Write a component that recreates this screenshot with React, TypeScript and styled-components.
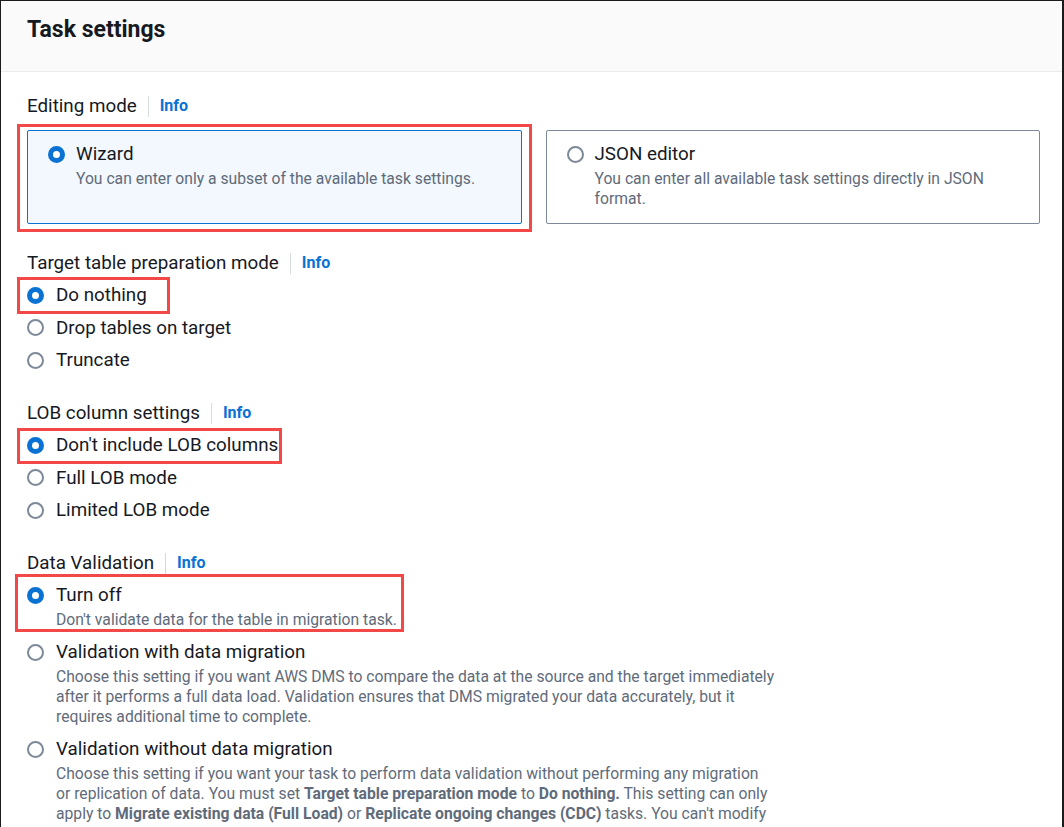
import React from 'react';
import styled, { createGlobalStyle } from 'styled-components';

const GlobalStyle = createGlobalStyle`
  html, body { margin: 0; padding: 0; background: #ffffff; }
  body { font-family: Roboto, "Open Sans", Arial, sans-serif; color: #16191f; }
  * { box-sizing: border-box; }
`;

const Frame = styled.div`
  width: 1064px;
  height: 827px;
  overflow: hidden;
  background: #ffffff;
  border-top: 1px solid #1b1b1b;
  border-left: 1px solid #1b1b1b;
  border-right: 2px solid #1b1b1b;
`;

const Header = styled.header`
  height: 71px;
  background: #fafafa;
  border-bottom: 1px solid #e9ebed;
  padding: 15px 26px 0;
`;

const Title = styled.h2`
  margin: 0;
  font-size: 23px;
  line-height: 28px;
  font-weight: 700;
  color: #16191f;
`;

const Body = styled.div`
  display: flex;
  flex-direction: column;
  gap: 31px;
  padding: 23px 22px 0 26px;
`;

const Field = styled.section<{ $tight?: boolean }>`
  display: flex;
  flex-direction: column;
  margin-bottom: ${(p) => (p.$tight ? '-3px' : '0')};
`;

const FieldLabel = styled.div`
  display: flex;
  align-items: center;
  font-size: 18.8px;
  line-height: 22px;
  color: #16191f;
`;

const Separator = styled.span`
  width: 1px;
  height: 21px;
  background: #d5dbdb;
  margin: 0 11px;
`;

const InfoLink = styled.a`
  font-size: 16px;
  font-weight: 700;
  color: #0972d3;
  text-decoration: none;
`;

const TileGrid = styled.div`
  display: grid;
  grid-template-columns: 1fr 1fr;
  gap: 24px;
  margin-top: 13px;
`;

const Tile = styled.div<{ $selected: boolean }>`
  flex: 1;
  display: flex;
  min-height: 94px;
  padding: 12px 20px 14px;
  border-radius: 2px;
  border: 1px solid ${(p) => (p.$selected ? '#0972d3' : '#7d8998')};
  background: ${(p) => (p.$selected ? '#f2f8fd' : '#ffffff')};
`;

const RadioGroup = styled.div<{ $gap: number }>`
  display: flex;
  flex-direction: column;
  align-items: flex-start;
  gap: ${(p) => p.$gap}px;
  margin-top: 10px;
`;

const Annotated = styled.div<{ $inset: string }>`
  position: relative;
  display: flex;
  &::after {
    content: '';
    position: absolute;
    inset: ${(p) => p.$inset};
    border: 3px solid #f24848;
    pointer-events: none;
  }
`;

const RadioRow = styled.label<{ $gap: number }>`
  display: flex;
  align-items: flex-start;
  gap: ${(p) => p.$gap}px;
  cursor: pointer;
`;

const RadioDot = styled.span<{ $checked: boolean }>`
  flex: none;
  width: 17px;
  height: 17px;
  margin-top: 2.5px;
  border-radius: 50%;
  background: #ffffff;
  border: ${(p) => (p.$checked ? '5px solid #0972d3' : '2px solid #7d8998')};
`;

const RadioText = styled.div`
  display: flex;
  flex-direction: column;
`;

const RadioLabel = styled.span`
  font-size: 18.8px;
  line-height: 22px;
  color: #16191f;
  white-space: nowrap;
`;

const RadioDesc = styled.span<{ $nowrap?: boolean }>`
  margin-top: 4px;
  font-size: 15.7px;
  line-height: 20px;
  color: #5f6b7a;
  white-space: ${(p) => (p.$nowrap ? 'nowrap' : 'normal')};
  b {
    font-weight: 700;
  }
`;

type Opt = {
  label: string;
  desc?: React.ReactNode;
  checked?: boolean;
  mark?: string;
  nowrap?: boolean;
};

function Radio({ opt, gap }: { opt: Opt; gap: number }) {
  const row = (
    <RadioRow $gap={gap}>
      <RadioDot $checked={!!opt.checked} />
      <RadioText>
        <RadioLabel>{opt.label}</RadioLabel>
        {opt.desc && <RadioDesc $nowrap={opt.nowrap}>{opt.desc}</RadioDesc>}
      </RadioText>
    </RadioRow>
  );
  return opt.mark ? <Annotated $inset={opt.mark}>{row}</Annotated> : row;
}

function Label({ text }: { text: string }) {
  return (
    <FieldLabel>
      {text}
      <Separator />
      <InfoLink href="#">Info</InfoLink>
    </FieldLabel>
  );
}

const sections: { title: string; gap: number; options: Opt[] }[] = [
  {
    title: 'Target table preparation mode',
    gap: 10.5,
    options: [
      { label: 'Do nothing', checked: true, mark: '-7px -23px -8px -10px' },
      { label: 'Drop tables on target' },
      { label: 'Truncate' },
    ],
  },
  {
    title: 'LOB column settings',
    gap: 10.5,
    options: [
      { label: "Don't include LOB columns", checked: true, mark: '-6px -4px -8px -10px' },
      { label: 'Full LOB mode' },
      { label: 'Limited LOB mode' },
    ],
  },
  {
    title: 'Data Validation',
    gap: 11,
    options: [
      {
        label: 'Turn off',
        checked: true,
        nowrap: true,
        desc: "Don't validate data for the table in migration task.",
        mark: '-10px -7px -2px -12px',
      },
      {
        label: 'Validation with data migration',
        nowrap: true,
        desc: (
          <>
            Choose this setting if you want AWS DMS to compare the data at the source and the target immediately
            <br />
            after it performs a full data load. Validation ensures that DMS migrated your data accurately, but it
            <br />
            requires additional time to complete.
          </>
        ),
      },
      {
        label: 'Validation without data migration',
        nowrap: true,
        desc: (
          <>
            Choose this setting if you want your task to perform data validation without performing any migration
            <br />
            or replication of data. You must set <b>Target table preparation mode</b> to <b>Do nothing.</b> This
            setting can only
            <br />
            apply to <b>Migrate existing data (Full Load)</b> or <b>Replicate ongoing changes (CDC)</b> tasks. You
            can't modify
          </>
        ),
      },
    ],
  },
];

export default function App() {
  return (
    <>
      <GlobalStyle />
      <Frame>
        <Header>
          <Title>Task settings</Title>
        </Header>
        <Body>
          <Field $tight>
            <Label text="Editing mode" />
            <TileGrid>
              <Annotated $inset="-6px -10px -8px -10px">
                <Tile $selected>
                  <Radio
                    gap={11}
                    opt={{
                      label: 'Wizard',
                      checked: true,
                      desc: 'You can enter only a subset of the available task settings.',
                    }}
                  />
                </Tile>
              </Annotated>
              <Tile $selected={false}>
                <Radio
                  gap={11}
                  opt={{
                    label: 'JSON editor',
                    desc: 'You can enter all available task settings directly in JSON format.',
                  }}
                />
              </Tile>
            </TileGrid>
          </Field>
          {sections.map((s) => (
            <Field key={s.title}>
              <Label text={s.title} />
              <RadioGroup $gap={s.gap}>
                {s.options.map((o) => (
                  <Radio key={o.label} opt={o} gap={12} />
                ))}
              </RadioGroup>
            </Field>
          ))}
        </Body>
      </Frame>
    </>
  );
}
